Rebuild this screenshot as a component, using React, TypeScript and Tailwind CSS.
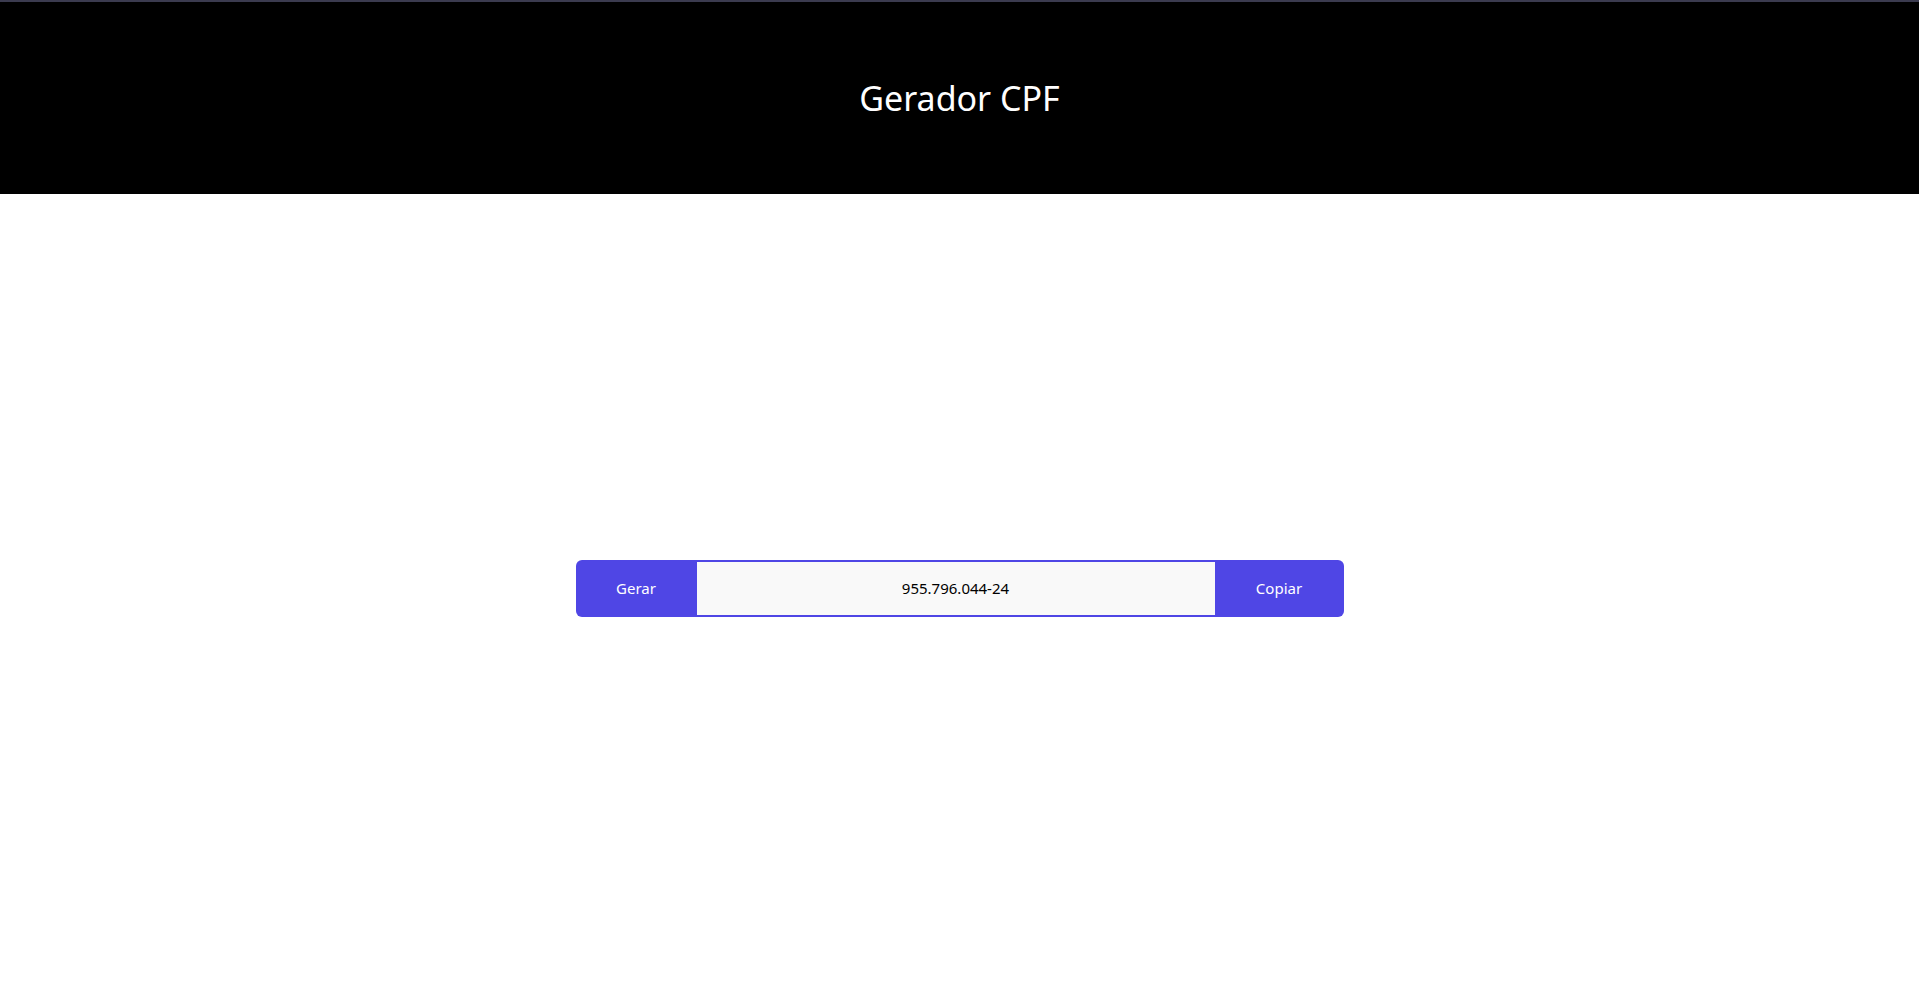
import { useState } from "react";

function gerarCpf() {
  const n = Array.from({ length: 9 }, () => Math.floor(Math.random() * 10));
  const dv = (arr: number[]) => {
    const s = arr.reduce((acc, d, i) => acc + d * (arr.length + 1 - i), 0);
    const r = (s * 10) % 11;
    return r === 10 ? 0 : r;
  };
  const d1 = dv(n);
  const d2 = dv([...n, d1]);
  const all = [...n, d1, d2].join("");
  return `${all.slice(0, 3)}.${all.slice(3, 6)}.${all.slice(6, 9)}-${all.slice(9)}`;
}

export default function App() {
  const [cpf, setCpf] = useState("955.796.044-24");

  return (
    <div
      className="min-h-screen flex flex-col bg-white"
      style={{ fontFamily: '"Noto Sans", "Open Sans", sans-serif' }}
    >
      <header className="h-[194px] bg-black border-t-2 border-[#3b3b4f] flex items-center justify-center">
        <h1 className="text-white text-[34px] leading-none font-normal">Gerador CPF</h1>
      </header>

      <main className="flex-1 flex items-center justify-center">
        <div className="w-full max-w-3xl flex h-[57px]">
          <button
            onClick={() => setCpf(gerarCpf())}
            className="w-[121px] shrink-0 bg-[#4f46e5] text-white text-[15px] rounded-l-md"
          >
            Gerar
          </button>
          <input
            readOnly
            value={cpf}
            className="flex-1 min-w-0 bg-[#f9f9f9] border-y-2 border-[#4f46e5] text-center text-[15px] text-black outline-none"
          />
          <button
            onClick={() => navigator.clipboard?.writeText(cpf)}
            className="w-[129px] shrink-0 bg-[#4f46e5] text-white text-[15px] rounded-r-md"
          >
            Copiar
          </button>
        </div>
      </main>
    </div>
  );
}
